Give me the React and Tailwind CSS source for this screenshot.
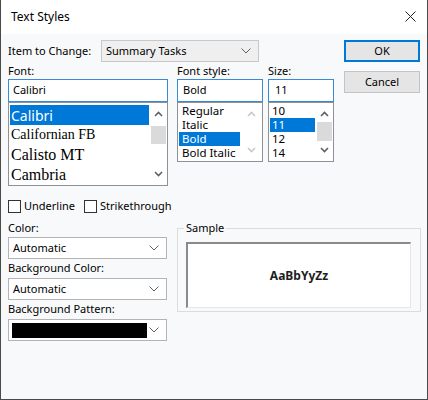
import React from "react";

function DropChevron() {
    return (
        <svg width="10" height="6" viewBox="0 0 10 6" className="text-[#606060]">
            <path d="M0.5 0.5 L5 5 L9.5 0.5" fill="none" stroke="currentColor" strokeWidth="1" />
        </svg>
    );
}

function ScrollArrow({ up, disabled }) {
    return (
        <svg width="9" height="6" viewBox="0 0 9 6" className={disabled ? "text-[#c8c8c8]" : "text-[#606060]"}>
            <path
                d={up ? "M1 5 L4.5 1.5 L8 5" : "M1 1 L4.5 4.5 L8 1"}
                fill="none"
                stroke="currentColor"
                strokeWidth="1.6"
            />
        </svg>
    );
}

function Select({ children, gray }) {
    return (
        <div
            className={`flex h-[22px] items-center justify-between border pl-[4px] pr-[7px] ${
                gray ? "border-[#c8c8c8] bg-[#efefef]" : "border-[#b4b4b4] bg-white"
            }`}
        >
            {children}
            <DropChevron />
        </div>
    );
}

function Scrollbar({ disabled, thumbTop, thumbH, wide }) {
    return (
        <div
            className={`relative flex flex-col items-center justify-between bg-white py-[8px] ${
                wide ? "w-[22px]" : "w-[18px]"
            }`}
        >
            <ScrollArrow up disabled={disabled} />
            <ScrollArrow disabled={disabled} />
            {!disabled && (
                <div
                    className="absolute left-[2px] right-[1px] bg-[#dadada]"
                    style={{ top: thumbTop, height: thumbH }}
                />
            )}
        </div>
    );
}

function Checkbox({ label }) {
    return (
        <div className="flex items-center gap-[3px]">
            <div className="h-[13px] w-[13px] border border-[#333] bg-white" />
            <span>{label}</span>
        </div>
    );
}

export default function App() {
    const fontItems = [
        { name: "Calibri", cls: "h-[20px] text-[14px] font-['Noto_Sans',sans-serif]", sel: true },
        { name: "Californian FB", cls: "h-[19px] text-[14px]" },
        { name: "Calisto MT", cls: "h-[21px] text-[16px]" },
        { name: "Cambria", cls: "h-[19px] text-[16px]" },
    ];
    const styles = ["Regular", "Italic", "Bold", "Bold Italic"];
    const sizes = ["10", "11", "12", "14"];

    return (
        <div className="flex h-[400px] w-[428px] flex-col border-x border-b border-[#4a4a4a] bg-[#f8f9fa] font-['Noto_Sans',sans-serif] text-[11px] text-black">
            <div className="flex h-[34px] items-center justify-between bg-white pl-[10px] pr-[10px]">
                <span className="text-[12px]">Text Styles</span>
                <svg width="11" height="11" viewBox="0 0 11 11" className="mr-[1px] mt-[-2px]">
                    <path d="M0.5 0.5 L10.5 10.5 M10.5 0.5 L0.5 10.5" stroke="#222" strokeWidth="1" />
                </svg>
            </div>

            <div className="flex flex-1 flex-col pl-[7px] pt-[6px]">
                <div className="flex">
                    <div className="w-[326px]">
                        <div className="flex h-[22px] items-center">
                            <span className="w-[93px]">Item to Change:</span>
                            <div className="w-[158px]">
                                <Select gray>
                                    <span>Summary Tasks</span>
                                </Select>
                            </div>
                        </div>

                        <div className="flex">
                            <div className="w-[160px]">
                                <div className="flex h-[17px] items-end">Font:</div>
                                <div className="flex h-[23px] items-center border border-[#3a8ad6] bg-white pl-[4px]">
                                    Calibri
                                </div>
                                <div className="flex h-[84px] border border-[#8e9298] bg-white">
                                    <div className="flex-1 pl-[1px] pt-[2px] font-['Liberation_Serif',serif]">
                                        {fontItems.map((f) => (
                                            <div
                                                key={f.name}
                                                className={`flex items-center pl-[1px] ${f.cls} ${
                                                    f.sel ? "bg-[#0078d7] text-white" : ""
                                                }`}
                                            >
                                                {f.name}
                                            </div>
                                        ))}
                                    </div>
                                    <Scrollbar thumbTop={23} thumbH={18} />
                                </div>
                            </div>

                            <div className="ml-[9px] w-[86px]">
                                <div className="flex h-[17px] items-end">Font style:</div>
                                <div className="flex h-[23px] items-center border border-[#3a8ad6] bg-white pl-[5px]">
                                    Bold
                                </div>
                                <div className="flex h-[60px] border border-[#8e9298] bg-white">
                                    <div className="flex-1 pl-[1px] pt-[1px] text-[11.5px]">
                                        {styles.map((s) => (
                                            <div
                                                key={s}
                                                className={`flex h-[14px] items-center pl-[3px] ${
                                                    s === "Bold" ? "bg-[#0078d7] text-white" : ""
                                                }`}
                                            >
                                                {s}
                                            </div>
                                        ))}
                                    </div>
                                    <Scrollbar disabled wide />
                                </div>
                            </div>

                            <div className="ml-[5px] w-[66px]">
                                <div className="flex h-[17px] items-end">Size:</div>
                                <div className="flex h-[23px] items-center border border-[#3a8ad6] bg-white pl-[6px]">
                                    11
                                </div>
                                <div className="flex h-[60px] border border-[#8e9298] bg-white">
                                    <div className="flex-1 pl-[1px] pt-[1px] text-[11.5px]">
                                        {sizes.map((s) => (
                                            <div
                                                key={s}
                                                className={`flex h-[14px] items-center pl-[2px] ${
                                                    s === "11" ? "bg-[#0078d7] text-white" : ""
                                                }`}
                                            >
                                                {s}
                                            </div>
                                        ))}
                                    </div>
                                    <Scrollbar thumbTop={19} thumbH={19} />
                                </div>
                            </div>
                        </div>
                    </div>

                    <div className="ml-[10px] flex w-[76px] flex-col">
                        <button className="flex h-[22px] items-center justify-center border-2 border-[#0078d7] bg-[#e5e5e5]">
                            OK
                        </button>
                        <button className="mt-[9px] flex h-[22px] items-center justify-center border border-[#c4c4c4] bg-[#e5e5e5]">
                            Cancel
                        </button>
                    </div>
                </div>

                <div className="mt-[12px] flex h-[16px] items-center">
                    <Checkbox label="Underline" />
                    <div className="ml-[9px]">
                        <Checkbox label="Strikethrough" />
                    </div>
                </div>

                <div className="mt-[6px] flex">
                    <div className="w-[159px]">
                        <div className="flex h-[17px] items-center">Color:</div>
                        <Select>
                            <span>Automatic</span>
                        </Select>
                        <div className="flex h-[19px] items-center">Background Color:</div>
                        <Select>
                            <span>Automatic</span>
                        </Select>
                        <div className="flex h-[19px] items-center">Background Pattern:</div>
                        <Select>
                            <div className="ml-[-1px] h-[15px] w-[135px] bg-black" />
                        </Select>
                    </div>

                    <div className="relative ml-[10px] mt-[8px] h-[84px] w-[244px] border border-[#dcdcdc] pl-[8px] pt-[13px]">
                        <span className="absolute left-[6px] top-[-9px] bg-[#f8f9fa] px-[2px]">Sample</span>
                        <div className="flex h-[66px] w-[225px] items-center justify-center border-l-2 border-t-2 border-b border-r border-l-[#8a8a8a] border-t-[#8a8a8a] border-b-[#e6e6e6] border-r-[#e6e6e6] bg-white text-[12px] font-bold text-[#1e1e1e]">
                            AaBbYyZz
                        </div>
                    </div>
                </div>
            </div>
        </div>
    );
}
